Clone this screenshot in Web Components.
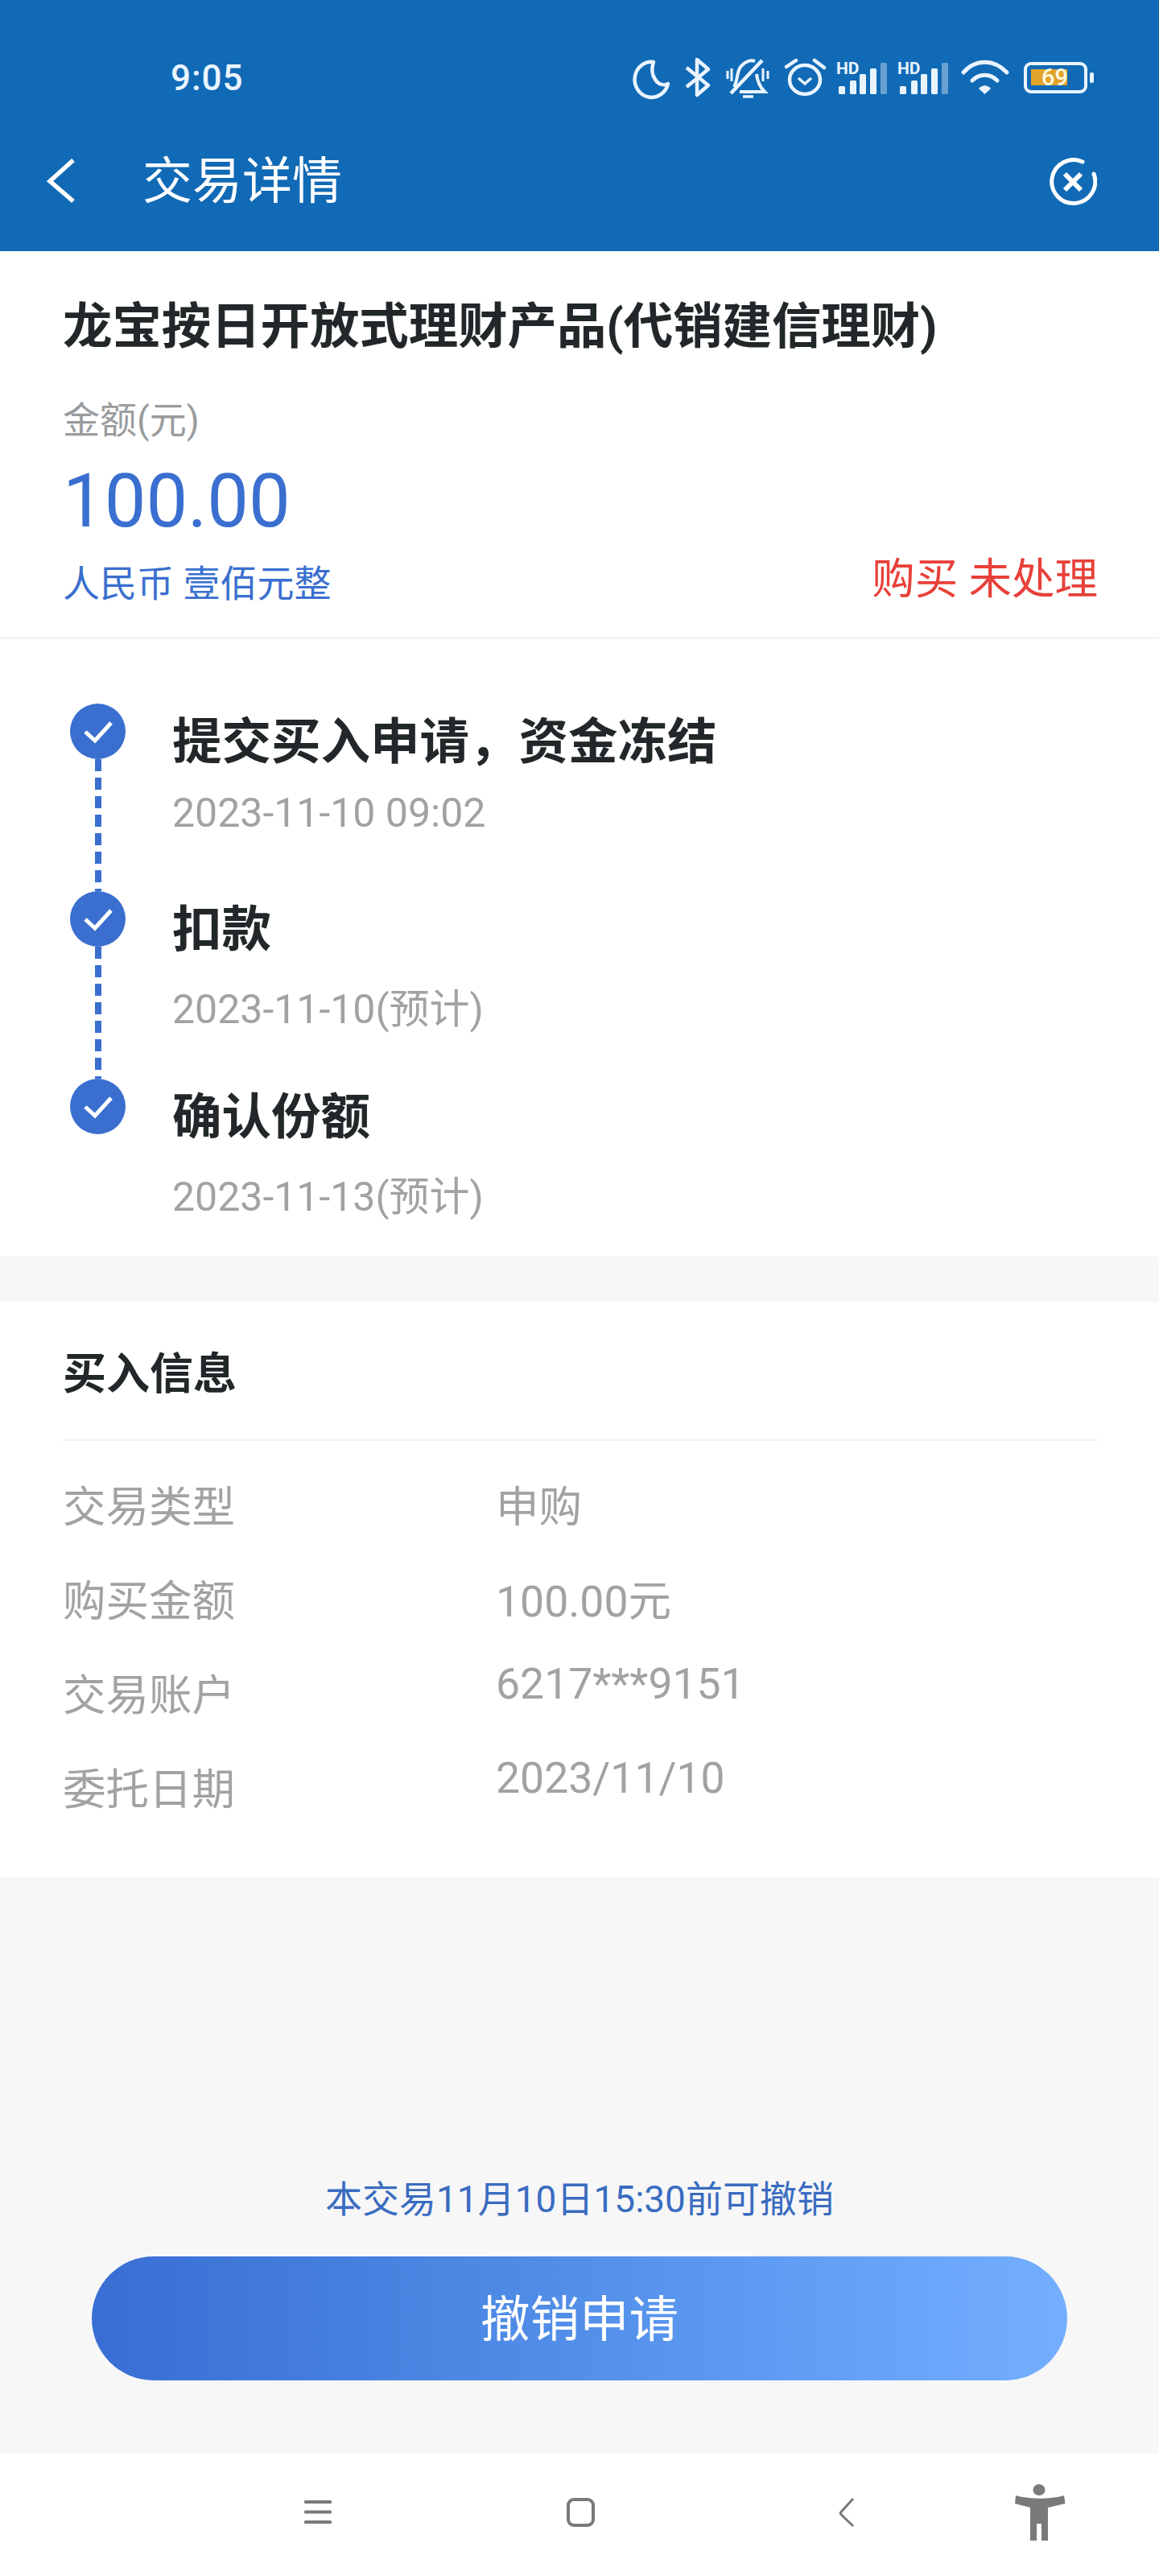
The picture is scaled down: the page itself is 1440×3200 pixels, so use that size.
<!DOCTYPE html>
<html lang="zh">
<head>
<meta charset="utf-8">
<title>交易详情</title>
<style>
    html, body { margin: 0; padding: 0; }
    body {
        width: 1440px;
        height: 3200px;
        background: #f7f7f8;
        font-family: "Roboto", "Noto Sans CJK SC", sans-serif;
        display: flex;
        flex-direction: column;
        overflow: hidden;
    }
</style>
</head>
<body>
<app-header></app-header>
<trade-summary></trade-summary>
<trade-timeline>
    <timeline-step title="提交买入申请，资金冻结" time="2023-11-10 09:02" gap="14"></timeline-step>
    <timeline-step title="扣款" time="2023-11-10(预计)" gap="25"></timeline-step>
    <timeline-step title="确认份额" time="2023-11-13(预计)" gap="25" last></timeline-step>
</trade-timeline>
<buy-info>
    <info-row label="交易类型" value="申购"></info-row>
    <info-row label="购买金额" value="100.00元"></info-row>
    <info-row label="交易账户" value="6217***9151" raised></info-row>
    <info-row label="委托日期" value="2023/11/10" raised></info-row>
</buy-info>
<cancel-bar></cancel-bar>
<nav-keys></nav-keys>

<script>
class AppHeader extends HTMLElement {
    constructor() {
        super();
        this.attachShadow({ mode: 'open' }).innerHTML = `
            <style>
                :host { display: block; height: 312px; background: #116ab5; color: #fff; flex: none; }
                .status { height: 146px; display: flex; align-items: flex-start; justify-content: space-between; }
                .time { font-size: 44px; font-weight: 500; line-height: 48px; margin: 73px 0 0 212px; letter-spacing: 1px; color: #eaf4ff; }
                .icons { margin: 60px 70px 0 0; }
                .bar { height: 160px; display: flex; align-items: center; }
                .back { margin-left: 58px; width: 40px; height: 60px; }
                h1 { font-size: 62px; font-weight: 400; margin: 0 0 0 79px; line-height: 84px; flex: 1; }
                .close { margin-right: 77px; width: 60px; height: 60px; }
            </style>
            <div class="status">
                <span class="time">9:05</span>
                <svg class="icons" width="590" height="70" viewBox="780 60 590 70" fill="none" stroke="#eaf4ff" stroke-width="4.5">
                    <!-- moon -->
                    <path d="M812 77A21 22 0 1 0 830 104C818 110 806 94 812 77z" stroke-linejoin="round"/>
                    <!-- bluetooth -->
                    <path d="M853 84L880 106 866 118V74L880 86 853 108" stroke-linejoin="round"/>
                    <!-- muted bell -->
                    <path d="M904 88v10M909 85v16M948 85v16M954 88v10" stroke-width="3"/>
                    <path d="M912 108C917 100 915 88 921 82 925 77 932 74 938 76M940 92C941 101 944 108 950 114H919" stroke-width="4"/>
                    <path d="M923 120H936" stroke-width="3.5"/>
                    <path d="M908 116L947 75"/>
                    <!-- alarm -->
                    <ellipse cx="1000" cy="99" rx="19" ry="18"/>
                    <path d="M977 83L989 75M1012 75L1024 84" stroke-linecap="round"/>
                    <path d="M992 97l8 7 8-7" stroke-width="3.5"/>
                    <!-- signal -->
                    <g stroke="none" fill="#eaf4ff">
                        <rect x="1042" y="107" width="8" height="10" rx="1.5"/>
                        <rect x="1056" y="100" width="8" height="17" rx="1.5"/>
                        <rect x="1068" y="92" width="8" height="25" rx="1.5"/>
                        <rect x="1081" y="85" width="8" height="32" rx="1.5"/>
                        <rect x="1094" y="78" width="8" height="39" rx="1.5" opacity=".4"/>
                        <rect x="1118" y="107" width="8" height="10" rx="1.5"/>
                        <rect x="1132" y="100" width="8" height="17" rx="1.5"/>
                        <rect x="1144" y="92" width="8" height="25" rx="1.5"/>
                        <rect x="1157" y="85" width="8" height="32" rx="1.5"/>
                        <rect x="1170" y="78" width="8" height="39" rx="1.5" opacity=".4"/>
                        <text x="1039" y="92" font-family="Roboto" font-weight="700" font-size="21">HD</text>
                        <text x="1115" y="92" font-family="Roboto" font-weight="700" font-size="21">HD</text>
                        <path d="M1216 110C1221 105 1226 105 1231 110L1223.5 117z"/>
                    </g>
                    <!-- wifi -->
                    <path d="M1197 90C1212 73 1235 73 1251 90M1208 100C1217 91 1230 91 1239 100" stroke-linecap="round" stroke-width="5"/>
                    <!-- battery -->
                    <rect x="1274" y="79" width="75" height="35" rx="7" stroke-width="4"/>
                    <rect x="1281" y="86" width="45" height="20" fill="#e2a32b" stroke="none"/>
                    <rect x="1354" y="90" width="5" height="13" rx="2" fill="#eaf4ff" stroke="none"/>
                    <text x="1294" y="106" font-family="Roboto" font-weight="500" font-size="29" fill="#fff9e0" stroke="none">69</text>
                </svg>
            </div>
            <div class="bar">
                <svg class="back" viewBox="0 0 40 60" fill="none" stroke="#fff" stroke-width="5.5"><path d="M33 3L4 29l29 25"/></svg>
                <h1>交易详情</h1>
                <svg class="close" viewBox="0 0 60 60" fill="none" stroke="#fff" stroke-width="5">
                    <path d="M42 5A27 27 0 1 0 56 20" stroke-linecap="round"/>
                    <path d="M20 20l20 20M40 20L20 40" stroke-width="6"/>
                </svg>
            </div>`;
    }
}

class TradeSummary extends HTMLElement {
    constructor() {
        super();
        this.attachShadow({ mode: 'open' }).innerHTML = `
            <style>
                :host { display: block; height: 479px; flex: none; background: #fff; border-bottom: 3px solid #f5f5f6; padding: 0 76px 0 78px; }
                h2 { margin: 0; padding-top: 52px; font-size: 61.4px; line-height: 84px; font-weight: 700; color: #222829; }
                .lbl { font-size: 46px; line-height: 60px; color: #9a9c9e; margin-top: 44px; }
                .amt { font-size: 92px; line-height: 108px; color: #3a6fd0; margin-top: 17px; }
                .row { display: flex; justify-content: space-between; align-items: flex-start; margin-top: 18px; }
                .cn { font-size: 46px; line-height: 60px; color: #3a6fd0; }
                .state { font-size: 53.5px; line-height: 64px; color: #e8403a; margin-top: -7px; }
            </style>
            <h2>龙宝按日开放式理财产品(代销建信理财)</h2>
            <div class="lbl">金额(元)</div>
            <div class="amt">100.00</div>
            <div class="row"><span class="cn">人民币 壹佰元整</span><span class="state">购买 未处理</span></div>`;
    }
}

class TradeTimeline extends HTMLElement {
    constructor() {
        super();
        this.attachShadow({ mode: 'open' }).innerHTML = `
            <style>
                :host { display: block; height: 767px; flex: none; background: #fff; padding: 80px 0 0 87px; box-sizing: border-box; }
            </style>
            <slot></slot>`;
    }
}

class TimelineStep extends HTMLElement {
    constructor() {
        super();
        const last = this.hasAttribute('last');
        this.attachShadow({ mode: 'open' }).innerHTML = `
            <style>
                :host { display: flex; height: 233px; }
                .rail { width: 69px; flex: none; display: flex; flex-direction: column; align-items: center; }
                .dot { width: 69px; height: 69px; flex: none; }
                .line { width: 8px; height: 164px; background: repeating-linear-gradient(#3a6fd0 0 15px, transparent 15px 23px); }
                .text { margin-left: 58px; }
                .t { font-size: 61.5px; line-height: 84px; font-weight: 700; color: #222829; margin-top: 6px; }
                .d { font-size: 50px; line-height: 64px; color: #a0a2a4; margin-top: ${this.getAttribute('gap')}px; }
            </style>
            <div class="rail">
                <svg class="dot" viewBox="0 0 69 69"><circle cx="34.5" cy="34.5" r="34.5" fill="#3a6fd0"/><path d="M19 35l12 11 20-22" fill="none" stroke="#fff" stroke-width="5"/></svg>
                ${last ? '' : '<div class="line"></div>'}
            </div>
            <div class="text">
                <div class="t">${this.getAttribute('title')}</div>
                <div class="d">${this.getAttribute('time')}</div>
            </div>`;
    }
}

class BuyInfo extends HTMLElement {
    constructor() {
        super();
        this.attachShadow({ mode: 'open' }).innerHTML = `
            <style>
                :host { display: block; height: 715px; flex: none; margin-top: 56px; background: #fff; padding: 0 76px 0 78px; box-sizing: border-box; }
                h3 { margin: 0; height: 173px; box-sizing: border-box; border-bottom: 2px solid #f3f3f4; font-size: 54px; font-weight: 700; line-height: 72px; padding-top: 55px; color: #222829; }
                .rows { padding-top: 47px; }
            </style>
            <h3>买入信息</h3>
            <div class="rows"><slot></slot></div>`;
    }
}

class InfoRow extends HTMLElement {
    constructor() {
        super();
        const raised = this.hasAttribute('raised');
        this.attachShadow({ mode: 'open' }).innerHTML = `
            <style>
                :host { display: flex; align-items: flex-start; height: 117px; font-size: 53.5px; line-height: 72px; color: #a0a2a4; }
                .l { width: 538px; flex: none; }
                .v { margin-top: ${raised ? -15 : 0}px; }
            </style>
            <span class="l">${this.getAttribute('label')}</span>
            <span class="v">${this.getAttribute('value')}</span>`;
    }
}

class CancelBar extends HTMLElement {
    constructor() {
        super();
        this.attachShadow({ mode: 'open' }).innerHTML = `
            <style>
                :host { display: flex; flex-direction: column; align-items: center; flex: 1; justify-content: flex-end; padding-bottom: 91px; }
                .tip { font-size: 46px; line-height: 60px; color: #3a6cc0; margin-bottom: 41px; }
                button {
                    width: 1212px; height: 154px; border: 0; border-radius: 77px;
                    background: linear-gradient(90deg, #396dd3, #4a86e2 35%, #5f9cf3 70%, #74aeff);
                    color: #fff; font: 400 61.5px "Noto Sans CJK SC", sans-serif; padding: 0 0 8px;
                }
            </style>
            <div class="tip">本交易11月10日15:30前可撤销</div>
            <button>撤销申请</button>`;
    }
}

class NavKeys extends HTMLElement {
    constructor() {
        super();
        this.attachShadow({ mode: 'open' }).innerHTML = `
            <style>
                :host { display: block; height: 152px; flex: none; background: #fff; }
                svg { display: block; }
            </style>
            <svg width="1440" height="152" viewBox="0 0 1440 152" fill="#7b797b">
                <rect x="378" y="58" width="34" height="4" rx="1.5"/>
                <rect x="378" y="70.5" width="34" height="4" rx="1.5"/>
                <rect x="378" y="83" width="34" height="4" rx="1.5"/>
                <rect x="706" y="57" width="31" height="32" rx="7" fill="none" stroke="#7b797b" stroke-width="4"/>
                <path d="M1060 56l-15.500 17a2 2 0 0 0 0 2L1060 90" fill="none" stroke="#7b797b" stroke-width="3"/>
                <ellipse cx="1291" cy="45" rx="7.500" ry="7"/>
                <path d="M1262 52c18 5 42 5 60 0l1.500 10-21.500 5v41h-8V87h-6v21h-8V67l-19-5z"/>
            </svg>`;
    }
}

customElements.define('app-header', AppHeader);
customElements.define('trade-summary', TradeSummary);
customElements.define('trade-timeline', TradeTimeline);
customElements.define('timeline-step', TimelineStep);
customElements.define('buy-info', BuyInfo);
customElements.define('info-row', InfoRow);
customElements.define('cancel-bar', CancelBar);
customElements.define('nav-keys', NavKeys);
</script>
</body>
</html>
